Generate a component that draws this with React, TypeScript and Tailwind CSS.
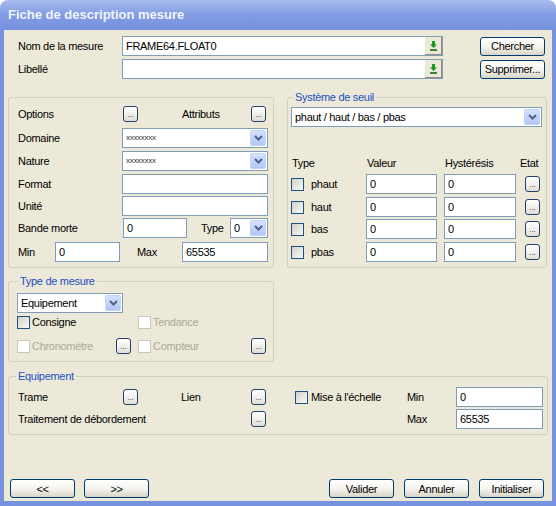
import React from "react";

function ChevBtn() {
  return (
    <div className="m-[1px] flex h-[16px] w-[16px] shrink-0 items-center justify-center rounded-[2px] border border-[#c3d3fb] bg-gradient-to-b from-[#d5e1fc] to-[#b2c6f6]">
      <svg width="9" height="6" viewBox="0 0 9 6">
        <path d="M1 1 L4.5 4.5 L8 1" stroke="#4d6185" strokeWidth="2" fill="none" />
      </svg>
    </div>
  );
}

function Combo({ className = "", value, small = false }: { className?: string; value: string; small?: boolean }) {
  return (
    <div className={`flex h-[20px] items-center border border-[#7f9db9] bg-white ${className}`}>
      <span className={`flex-1 truncate pl-[3px] ${small ? "text-[8px] tracking-[-0.3px] text-[#333]" : ""}`}>{value}</span>
      <ChevBtn />
    </div>
  );
}

function Field({ className = "", value = "" }: { className?: string; value?: string }) {
  return (
    <div className={`flex h-[20px] items-center border border-[#7f9db9] bg-white pl-[3px] ${className}`}>
      {value}
    </div>
  );
}

function DotBtn() {
  return (
    <div className="flex h-[16px] w-[15px] shrink-0 items-end justify-center rounded-[3px] border border-[#24406e] bg-gradient-to-b from-white to-[#e2e0d4] pb-[2px] text-[8px] leading-[8px] tracking-[0px] text-[#222]">
      ...
    </div>
  );
}

function XpBtn({ label, className = "" }: { label: string; className?: string }) {
  return (
    <div className={`flex h-[19px] w-[65px] shrink-0 items-center justify-center rounded-[3px] border border-[#003c74] bg-gradient-to-b from-white via-[#f5f4ef] to-[#d9d5c7] ${className}`}>
      {label}
    </div>
  );
}

function Check({ disabled = false }: { disabled?: boolean }) {
  return disabled ? (
    <span className="h-[13px] w-[13px] shrink-0 border border-[#cac8bb] bg-white" />
  ) : (
    <span className="h-[13px] w-[13px] shrink-0 border border-[#1c5180] bg-gradient-to-br from-[#d2d2cb] to-[#f8f8f6]" />
  );
}

function GreenBtn() {
  return (
    <div className="ml-auto flex h-[18px] w-[17px] shrink-0 items-center justify-center border-b border-r border-[#8f8d80] bg-[#ece9d8]">
      <svg width="7" height="10" viewBox="0 0 7 10">
        <path d="M2 0 H5 V3.5 H7 L3.5 7 L0 3.5 H2 Z" fill="#1d9a23" />
        <rect x="0" y="8.2" width="7" height="1.6" fill="#146b18" />
      </svg>
    </div>
  );
}

function Title({ children, className = "" }: { children: React.ReactNode; className?: string }) {
  return (
    <span className={`-mt-[7px] w-fit bg-[#ece9d8] px-[2px] leading-[13px] text-[#1c4fc4] ${className}`}>{children}</span>
  );
}

export default function App() {
  return (
    <div className="h-[506px] w-[556px] bg-white font-['Liberation_Sans',sans-serif] text-[11px] leading-[14px] tracking-[-0.3px] text-black">
      <div className="flex h-full flex-col overflow-hidden rounded-t-[8px]">
        <div className="flex h-[30px] shrink-0 items-center bg-gradient-to-b from-[#aabcee] via-[#809be3] to-[#7793df] pl-[8px]">
          <span className="text-[13px] font-bold tracking-[0px] text-[#f2f5fd]">Fiche de description mesure</span>
        </div>
        <div className="flex flex-1 flex-col border-x-4 border-b-[5px] border-[#7793df] bg-[#ece9d8] px-[4px] pb-[3px]">
          {/* top rows */}
          <div className="mt-[6px] flex h-[20px] items-center">
            <span className="w-[114px] pl-[10px]">Nom de la mesure</span>
            <div className="flex h-[20px] w-[321px] items-center border border-[#7f9db9] bg-white pl-[3px]">
              FRAME64.FLOAT0
              <GreenBtn />
            </div>
            <XpBtn label="Chercher" className="ml-[37px]" />
          </div>
          <div className="mt-[3px] flex h-[20px] items-center">
            <span className="w-[114px] pl-[10px]">Libellé</span>
            <div className="flex h-[20px] w-[321px] items-center border border-[#7f9db9] bg-white pl-[3px]">
              <GreenBtn />
            </div>
            <XpBtn label="Supprimer..." className="ml-[37px]" />
          </div>

          {/* group boxes */}
          <div className="mt-[18px] flex">
            <div className="flex h-[171px] w-[266px] flex-col rounded-[3px] border border-[#d0d0bf] pl-[9px] pt-[8px]">
              <div className="flex h-[16px] items-center">
                <span className="w-[105px]">Options</span>
                <DotBtn />
                <span className="ml-[44px] w-[69px]">Attributs</span>
                <DotBtn />
              </div>
              <div className="mt-[6px] flex items-center">
                <span className="w-[104px]">Domaine</span>
                <Combo className="w-[146px]" value="xxxxxxxx" small />
              </div>
              <div className="mt-[3px] flex items-center">
                <span className="w-[104px]">Nature</span>
                <Combo className="w-[146px]" value="xxxxxxxx" small />
              </div>
              <div className="mt-[3px] flex items-center">
                <span className="w-[104px]">Format</span>
                <Field className="w-[146px]" />
              </div>
              <div className="mt-[2px] flex items-center">
                <span className="w-[104px]">Unité</span>
                <Field className="w-[146px]" />
              </div>
              <div className="mt-[2px] flex items-center">
                <span className="w-[105px]">Bande morte</span>
                <Field className="w-[64px]" value="0" />
                <span className="ml-[14px] w-[29px]">Type</span>
                <Combo className="w-[38px]" value="0" />
              </div>
              <div className="mt-[4px] flex items-center">
                <span className="w-[37px]">Min</span>
                <Field className="w-[65px]" value="0" />
                <span className="ml-[17px] w-[45px]">Max</span>
                <Field className="w-[86px]" value="65535" />
              </div>
            </div>

            <div className="ml-[13px] flex h-[171px] w-[260px] flex-col rounded-[3px] border border-[#d0d0bf]">
              <Title className="ml-[5px]">Système de seuil</Title>
              <Combo className="ml-[3px] mt-[3px] w-[251px]" value="phaut / haut / bas / pbas" />
              <div className="ml-[4px] mt-[29px] flex h-[14px] items-center">
                <span className="w-[75px]">Type</span>
                <span className="w-[78px]">Valeur</span>
                <span className="w-[75px]">Hystérésis</span>
                <span>Etat</span>
              </div>
              {["phaut", "haut", "bas", "pbas"].map((t, i) => (
                <div key={t} className={`ml-[3px] flex h-[20px] items-center ${i === 0 ? "mt-[4px]" : i === 2 ? "mt-[2px]" : "mt-[3px]"}`}>
                  <Check />
                  <span className="ml-[7px] w-[55px]">{t}</span>
                  <Field className="w-[71px]" value="0" />
                  <Field className="ml-[7px] w-[72px]" value="0" />
                  <div className="ml-[9px]">
                    <DotBtn />
                  </div>
                </div>
              ))}
            </div>
          </div>

          {/* Type de mesure */}
          <div className="mt-[13px] flex h-[81px] w-[266px] flex-col rounded-[3px] border border-[#d0d0bf]">
            <Title className="ml-[9px]">Type de mesure</Title>
            <Combo className="ml-[8px] mt-[5px] w-[106px]" value="Equipement" />
            <div className="ml-[8px] mt-[1px] flex h-[16px] items-center">
              <div className="flex w-[121px] items-center">
                <Check />
                <span className="ml-[2px]">Consigne</span>
              </div>
              <Check disabled />
              <span className="ml-[2px] text-[#aca899]">Tendance</span>
            </div>
            <div className="ml-[8px] mt-[8px] flex h-[16px] items-center">
              <div className="flex w-[99px] items-center">
                <Check disabled />
                <span className="ml-[2px] text-[#aca899]">Chronomètre</span>
              </div>
              <DotBtn />
              <div className="ml-[7px] flex w-[113px] items-center">
                <Check disabled />
                <span className="ml-[2px] text-[#aca899]">Compteur</span>
              </div>
              <DotBtn />
            </div>
          </div>

          {/* Equipement */}
          <div className="mt-[14px] flex h-[59px] w-[540px] flex-col rounded-[3px] border border-[#d0d0bf] pl-[9px]">
            <Title className="-ml-[2px] mr-auto">Equipement</Title>
            <div className="mt-[4px] flex h-[20px] items-center">
              <span className="w-[105px]">Trame</span>
              <DotBtn />
              <span className="ml-[43px] w-[70px]">Lien</span>
              <DotBtn />
              <div className="flex w-[141px] items-center pl-[29px]">
                <Check />
                <span className="ml-[3px]">Mise à l'échelle</span>
              </div>
              <span className="w-[49px]">Min</span>
              <Field className="w-[87px]" value="0" />
            </div>
            <div className="mt-[2px] flex h-[20px] items-center">
              <span className="w-[233px]">Traitement de débordement</span>
              <DotBtn />
              <div className="w-[141px]" />
              <span className="w-[49px]">Max</span>
              <Field className="w-[87px]" value="65535" />
            </div>
          </div>

          {/* bottom buttons */}
          <div className="mt-auto flex items-center">
            <XpBtn label="<<" className="ml-[2px]" />
            <XpBtn label=">>" className="ml-[9px]" />
            <XpBtn label="Valider" className="ml-auto" />
            <XpBtn label="Annuler" className="ml-[10px]" />
            <XpBtn label="Initialiser" className="ml-[10px] mr-[4px]" />
          </div>
        </div>
      </div>
    </div>
  );
}
